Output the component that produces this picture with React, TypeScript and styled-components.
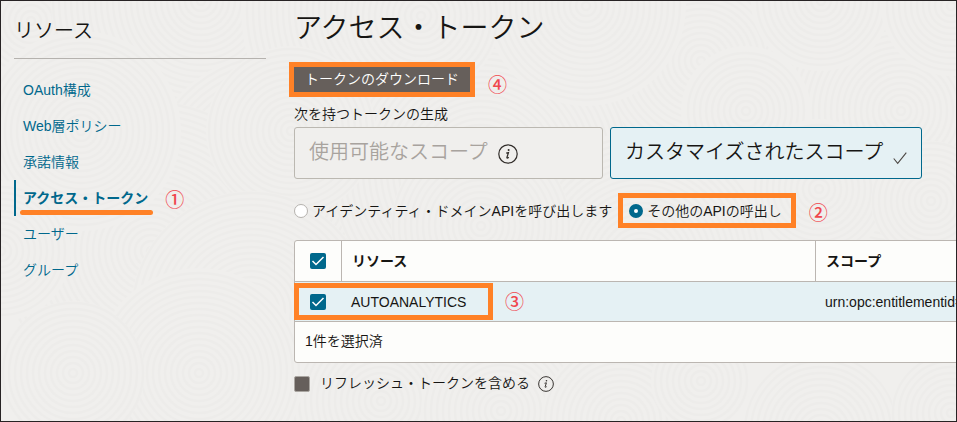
import React from "react";
import styled, { createGlobalStyle, css } from "styled-components";

const GlobalStyle = createGlobalStyle`
  *, *::before, *::after { box-sizing: border-box; }
  body {
    margin: 0;
    background: #f0efed;
    color: #161513;
    font-family: "Liberation Sans", "Noto Sans CJK JP", sans-serif;
    font-size: 14px;
    font-weight: 350;
    line-height: 20px;
  }
  button, input { font: inherit; }
`;

const teal = "#00688c";
const orange = "#ff8126";

const Page = styled.div`
  position: relative;
  display: grid;
  grid-template-columns: 252px minmax(0, 1fr);
  column-gap: 28px;
  min-height: 100vh;
  padding-left: 13px;
  border: 1px solid #272324;
  overflow: hidden;
`;

const Texture = styled.svg`
  position: absolute;
  inset: 0;
  width: 100%;
  height: 100%;
  pointer-events: none;
`;

const Sidebar = styled.nav`
  position: relative;
`;

const SidebarTitle = styled.h2`
  margin: 0;
  padding: 15px 0 12px;
  border-bottom: 1px solid #b5b2ae;
  font-size: 20px;
  font-weight: 350;
  line-height: 30px;
`;

const Links = styled.ul`
  margin: 0;
  padding: 13px 0 0;
  list-style: none;
`;

const LinkItem = styled.li`
  display: flex;
`;

const SideLink = styled.a<{ $active?: boolean }>`
  position: relative;
  padding: 8px 0 8px 7px;
  border-left: 2px solid ${(p) => (p.$active ? teal : "transparent")};
  color: ${teal};
  font-weight: ${(p) => (p.$active ? 700 : 350)};
  line-height: 20px;
  text-decoration: none;
`;

const Underline = styled.span`
  position: absolute;
  left: 4px;
  right: -5px;
  bottom: 1px;
  height: 5px;
  border-radius: 3px;
  background: ${orange};
`;

const stepText = css`
  display: flex;
  align-items: center;
  color: #f0484e;
  font-size: 19px;
  font-weight: 500;
`;

const Step = styled.span<{ $gap: number; $drop: number }>`
  ${stepText}
  position: absolute;
  left: calc(100% + ${(p) => p.$gap}px);
  top: ${(p) => p.$drop}px;
  bottom: 0;
`;

const Main = styled.main`
  position: relative;
  min-width: 0;
`;

const Title = styled.h1`
  margin: 0 0 18px;
  padding-top: 8px;
  font-size: 28px;
  font-weight: 350;
  line-height: 40px;
`;

const marked = css`
  &::after {
    content: "";
    position: absolute;
    inset: -5px;
    border: 5px solid ${orange};
    pointer-events: none;
  }
`;

const Marked = styled.div`
  position: relative;
  width: max-content;
  ${marked}
`;

const DownloadButton = styled.button`
  display: block;
  height: 25px;
  padding: 0 11px;
  border: 0;
  background: #665f5b;
  color: #fff;
  line-height: 25px;
`;

const GroupLabel = styled.p`
  margin: 12px 0 3px;
`;

const Cards = styled.div`
  display: flex;
  gap: 7px;
`;

const Card = styled.button<{ $selected?: boolean }>`
  flex: 0 1 309px;
  display: flex;
  align-items: center;
  gap: 10px;
  height: 52px;
  padding: 0 14px;
  border: 1px solid ${(p) => (p.$selected ? teal : "#bbb8b1")};
  border-radius: 3px;
  background: ${(p) => (p.$selected ? "#e5f1f4" : "#f0efed")};
  color: ${(p) => (p.$selected ? "#161513" : "#a8a39e")};
  font-size: 20px;
  line-height: 30px;
  text-align: left;
  white-space: nowrap;
`;

const CardText = styled.span`
  padding-bottom: 2px;
`;

const CardIcon = styled.span<{ $low?: boolean }>`
  display: flex;
  padding-top: ${(p) => (p.$low ? 9 : 2)}px;
`;

const Radios = styled.div`
  display: flex;
  gap: 11px;
  padding: 19px 0 17px;
`;

const RadioItem = styled.div<{ $marked?: boolean }>`
  position: relative;
  display: flex;
  align-items: center;
  height: 25px;
  white-space: nowrap;
  ${(p) => p.$marked && marked}
  ${(p) => p.$marked && "padding: 0 9px 0 6px;"}
`;

const Radio = styled.input`
  appearance: none;
  width: 14px;
  height: 14px;
  margin: 0 4px 0 0;
  border: 1px solid #b5b2ae;
  border-radius: 50%;
  background: #fff;
  &:checked {
    border: 5px solid ${teal};
  }
`;

const TableFrame = styled.div`
  width: calc(100% + 200px);
  border: 1px solid #bbb6b1;
  border-radius: 3px;
  background: #fdfdfb;
`;

const Table = styled.table`
  width: 100%;
  border-collapse: separate;
  border-spacing: 0;
  table-layout: fixed;
`;

const CheckCol = styled.col`
  width: 46px;
`;

const ResourceCol = styled.col`
  width: 474px;
`;

const cell = css`
  position: relative;
  padding: 0 0 0 10px;
  border-bottom: 1px solid #bbb6b1;
  text-align: left;
  &:first-child { padding: 0; }
`;

const HeadCell = styled.th`
  ${cell}
  height: 41px;
  font-weight: 700;
  & + & { border-left: 1px solid #bbb6b1; }
`;

const BodyCell = styled.td`
  ${cell}
  height: 40px;
  background: #e5f1f4;
  &:first-child { z-index: 1; }
`;

const BoxHolder = styled.span`
  display: flex;
  justify-content: center;
`;

const RowMark = styled.span`
  position: absolute;
  top: 1px;
  bottom: 1px;
  left: -1px;
  width: 199px;
  border: 5px solid ${orange};
  pointer-events: none;
`;

const RowStep = styled.span`
  ${stepText}
  position: absolute;
  inset: 2px auto 0 164px;
`;

const TableFooter = styled.div`
  height: 40px;
  padding: 0 10px;
  line-height: 39px;
`;

const tick = `url("data:image/svg+xml,%3Csvg xmlns='http://www.w3.org/2000/svg' viewBox='0 0 16 16'%3E%3Cpath d='M2.5 8l3.5 3.5L13.5 4' fill='none' stroke='white' stroke-width='1.5'/%3E%3C/svg%3E")`;

const Checkbox = styled.input<{ $plain?: boolean }>`
  appearance: none;
  width: 16px;
  height: 16px;
  margin: 0;
  border-radius: 2px;
  background: ${(p) => (p.$plain ? "#665f5b" : teal)};
  ${(p) => p.$plain && "border: 1px solid #aaa6a1;"}
  &:checked { background-image: ${tick}; }
`;

const Refresh = styled.div`
  display: flex;
  align-items: center;
  gap: 8px;
  padding: 10px 0 24px;
`;

const RefreshLabel = styled.label`
  padding: 0 0 2px 2px;
`;

const InfoIcon = ({ size }: { size: number }) => (
  <svg width={size} height={size} viewBox="0 0 20 20" fill="none" role="img" aria-label="情報">
    <circle cx="10" cy="10" r="9.2" stroke="#312d2a" strokeWidth="1.2" />
    <circle cx="10.6" cy="6" r="1" fill="#312d2a" />
    <path d="M8.2 9.1l2.3-.6-1.6 5c-.2.8.6.9 1.9-.2" stroke="#312d2a" strokeWidth="1.2" />
  </svg>
);

const CheckIcon = () => (
  <svg width="14" height="14" viewBox="0 0 14 14" fill="none" aria-hidden="true">
    <path d="M.7 7.5l4 4.8L13.3 1.6" stroke="#4d4844" strokeWidth="1.1" />
  </svg>
);

/* Overlapping discs of ripples: centre x, centre y, outer radius. */
const ripples = [
  [30, 20, 150], [200, 0, 150], [400, 10, 160], [560, 0, 140], [700, 60, 130],
  [900, 110, 150], [280, 190, 140], [480, 170, 150], [640, 260, 130], [150, 250, 150],
  [820, 0, 70], [950, 5, 70], [585, 5, 100], [420, 15, 80], [80, 130, 100],
  [290, 130, 85], [745, 110, 65], [818, 188, 70], [930, 200, 60], [480, 225, 90],
  [0, 250, 70], [250, 310, 120], [380, 400, 90], [500, 410, 80], [620, 420, 80],
  [700, 380, 50], [820, 430, 80], [950, 412, 60], [198, 372, 105], [72, 372, 72],
];

const RippleTexture = () => (
  <Texture aria-hidden="true">
    {ripples.map(([x, y, r]) => (
      <g key={`${x}-${y}`} fill="none" stroke="#edecea" strokeWidth="2.4">
        <circle cx={x} cy={y} r={r} fill="#f0efed" stroke="none" />
        {Array.from({ length: Math.floor(r / 6) }, (_, i) => (
          <circle key={i} cx={x} cy={y} r={(i + 1) * 6 - 2} />
        ))}
      </g>
    ))}
  </Texture>
);

const links = ["OAuth構成", "Web層ポリシー", "承諾情報", "アクセス・トークン", "ユーザー", "グループ"];

export default function App() {
  return (
    <Page lang="ja">
      <GlobalStyle />
      <RippleTexture />
      <Sidebar aria-label="リソース">
        <SidebarTitle>リソース</SidebarTitle>
        <Links>
          {links.map((name) => {
            const active = name === "アクセス・トークン";
            return (
              <LinkItem key={name}>
                <SideLink href="#" $active={active} aria-current={active ? "page" : undefined}>
                  {name}
                  {active && <Underline />}
                  {active && <Step $gap={17} $drop={6}>①</Step>}
                </SideLink>
              </LinkItem>
            );
          })}
        </Links>
      </Sidebar>
      <Main>
        <Title>アクセス・トークン</Title>
        <Marked>
          <DownloadButton type="button">トークンのダウンロード</DownloadButton>
          <Step $gap={18} $drop={12}>④</Step>
        </Marked>
        <GroupLabel id="scope-label">次を持つトークンの生成</GroupLabel>
        <Cards role="group" aria-labelledby="scope-label">
          <Card type="button" aria-pressed="false">
            <CardText>使用可能なスコープ</CardText>
            <CardIcon><InfoIcon size={20} /></CardIcon>
          </Card>
          <Card type="button" aria-pressed="true" $selected>
            <CardText>カスタマイズされたスコープ</CardText>
            <CardIcon $low><CheckIcon /></CardIcon>
          </Card>
        </Cards>
        <Radios role="radiogroup" aria-label="API">
          <RadioItem>
            <Radio type="radio" name="api" id="api-domain" />
            <label htmlFor="api-domain">アイデンティティ・ドメインAPIを呼び出します</label>
          </RadioItem>
          <RadioItem $marked>
            <Radio type="radio" name="api" id="api-other" defaultChecked />
            <label htmlFor="api-other">その他のAPIの呼出し</label>
            <Step $gap={18} $drop={6}>②</Step>
          </RadioItem>
        </Radios>
        <TableFrame>
          <Table>
            <colgroup>
              <CheckCol />
              <ResourceCol />
              <col />
            </colgroup>
            <thead>
              <tr>
                <HeadCell scope="col">
                  <BoxHolder><Checkbox type="checkbox" defaultChecked aria-label="すべて選択" /></BoxHolder>
                </HeadCell>
                <HeadCell scope="col">リソース</HeadCell>
                <HeadCell scope="col">スコープ</HeadCell>
              </tr>
            </thead>
            <tbody>
              <tr>
                <BodyCell>
                  <BoxHolder><Checkbox type="checkbox" defaultChecked aria-label="AUTOANALYTICS" /></BoxHolder>
                  <RowMark />
                </BodyCell>
                <BodyCell>
                  AUTOANALYTICS
                  <RowStep>③</RowStep>
                </BodyCell>
                <BodyCell>urn:opc:entitlementid=</BodyCell>
              </tr>
            </tbody>
          </Table>
          <TableFooter>1件を選択済</TableFooter>
        </TableFrame>
        <Refresh>
          <Checkbox type="checkbox" id="refresh" $plain />
          <RefreshLabel htmlFor="refresh">リフレッシュ・トークンを含める</RefreshLabel>
          <InfoIcon size={16} />
        </Refresh>
      </Main>
    </Page>
  );
}
